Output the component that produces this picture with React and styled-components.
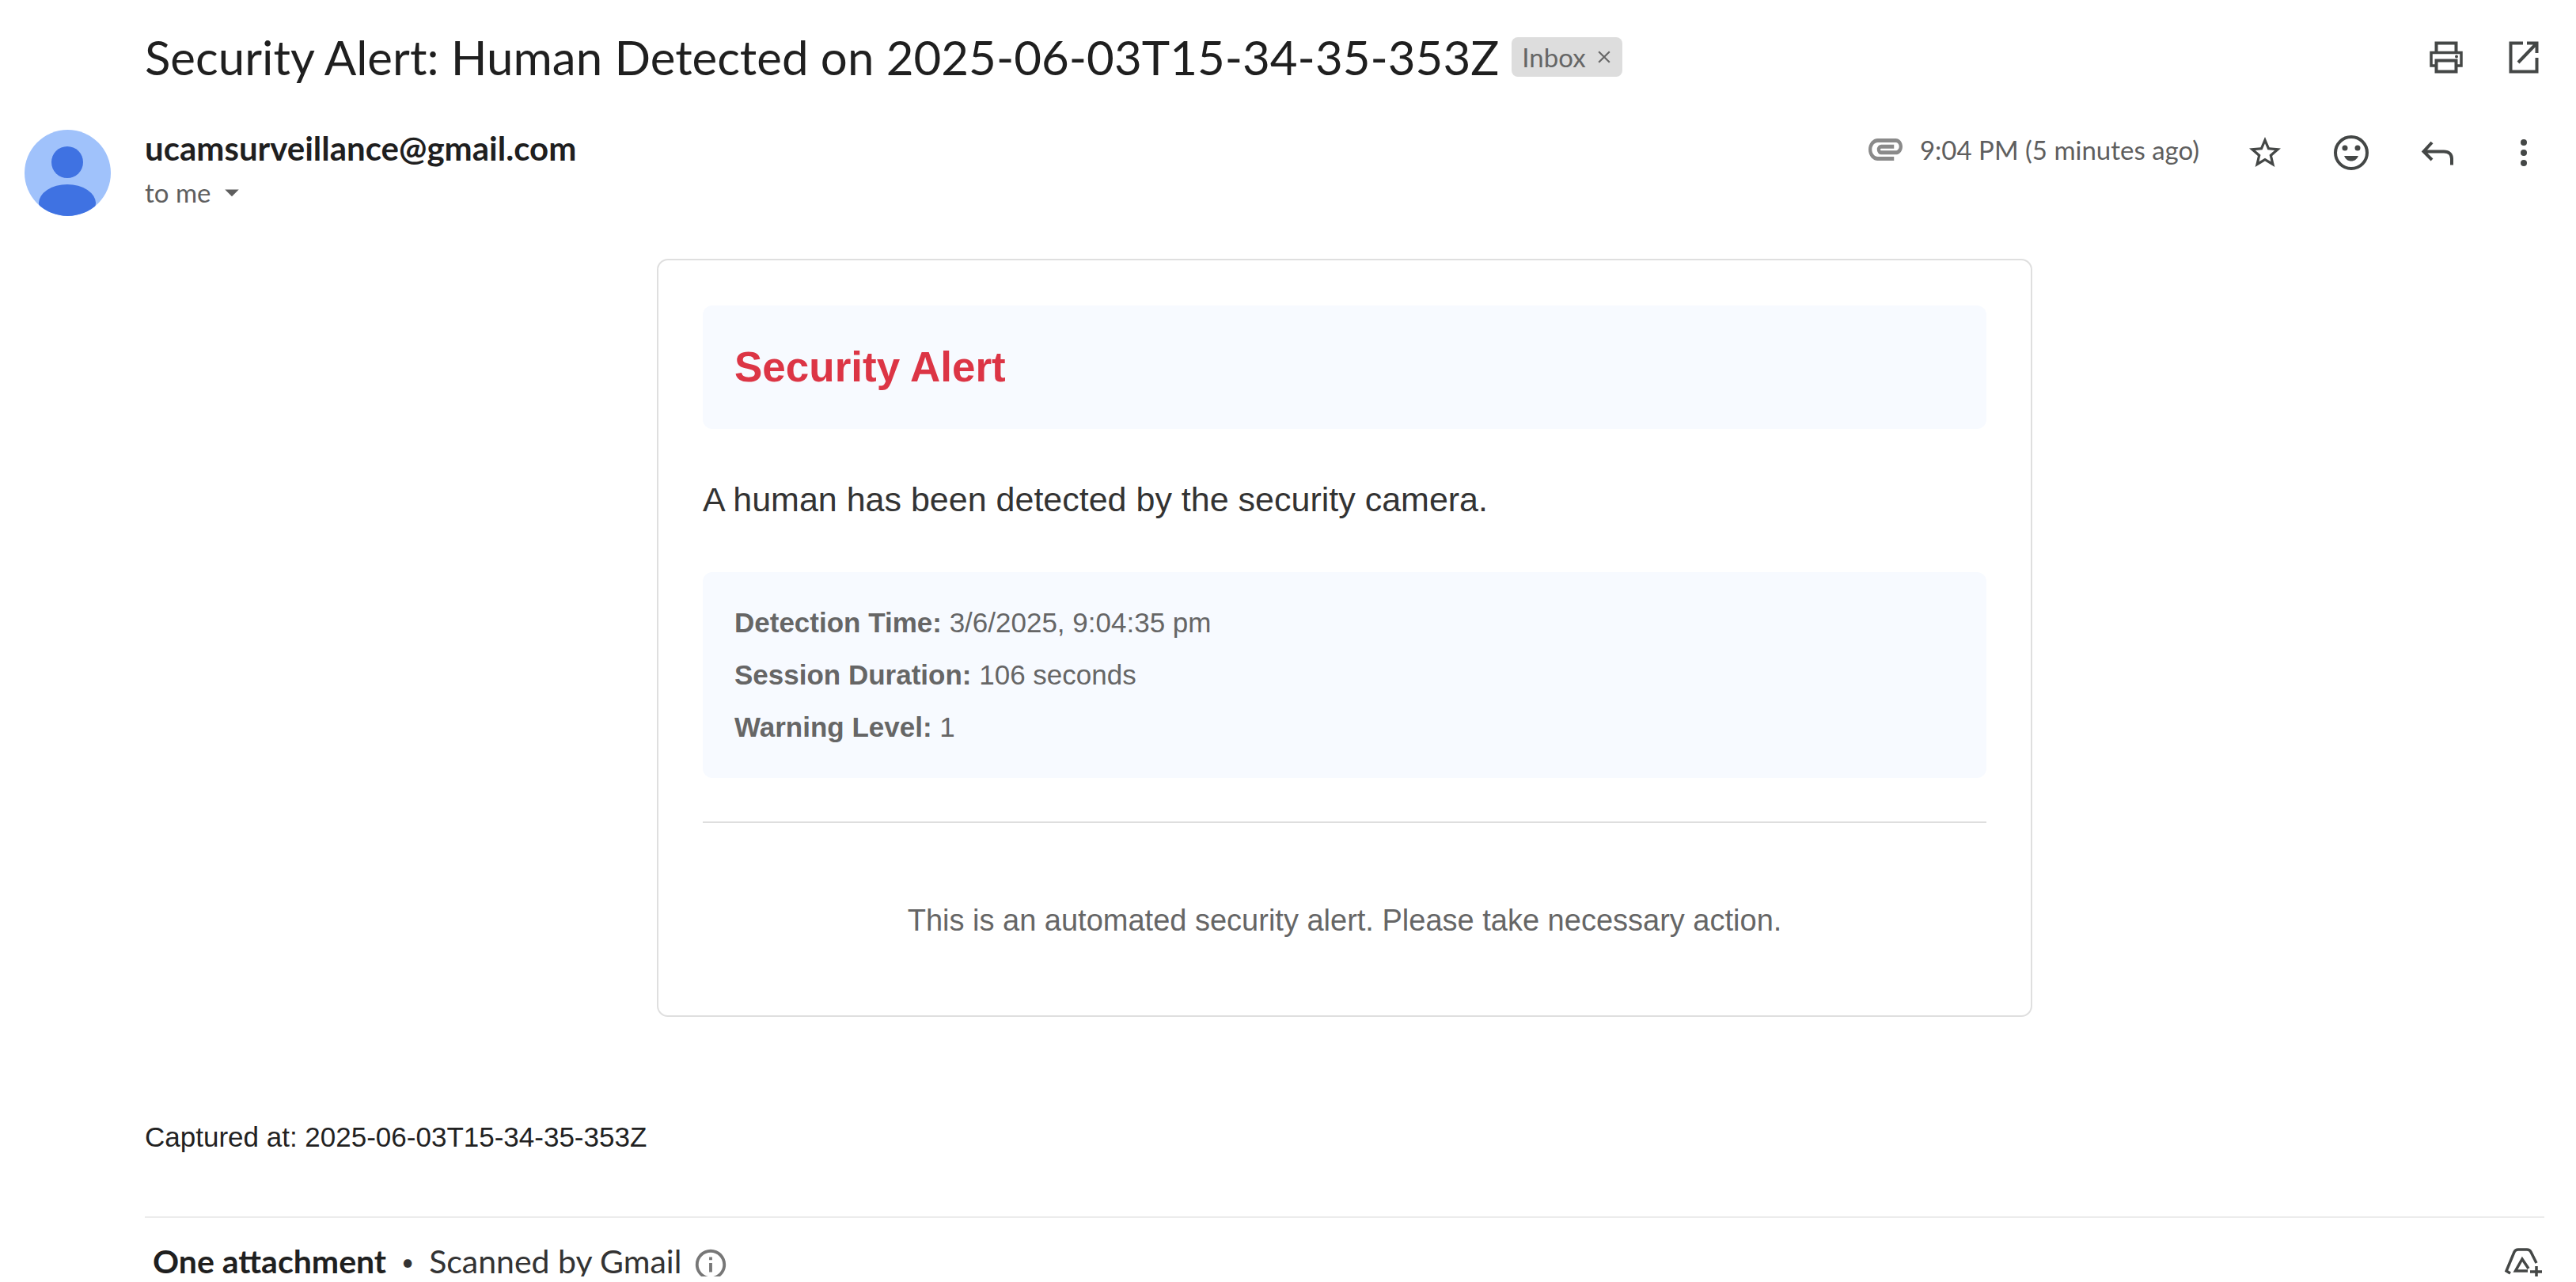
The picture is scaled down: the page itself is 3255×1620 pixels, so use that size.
import React from "react";
import styled, { createGlobalStyle } from "styled-components";
import { MdClose, MdInfoOutline, MdStarBorder, MdArrowDropDown } from "react-icons/md";

const GlobalStyle = createGlobalStyle`
  *, *::before, *::after { box-sizing: border-box; }
  body {
    margin: 0;
    background: #fff;
    color: #202124;
    font-family: Lato, "Open Sans", sans-serif;
  }
  h1, h2, p { margin: 0; }
`;

const Page = styled.main`
  padding: 36px 40px 0 31px;
`;

const SubjectRow = styled.header`
  display: flex;
  align-items: center;
  gap: 16px;
  padding-left: 152px;
`;

const Subject = styled.h1`
  font-size: 60px;
  line-height: 72px;
  font-weight: 400;
  color: #1f1f1f;
`;

const Chip = styled.span`
  display: inline-flex;
  align-items: center;
  gap: 10px;
  height: 50px;
  padding: 0 10px 0 13px;
  border-radius: 8px;
  background: #dddddd;
  color: #666;
  font-size: 33px;
  line-height: 40px;
`;

const PlainButton = styled.button`
  display: inline-flex;
  align-items: center;
  justify-content: center;
  flex: none;
  padding: 0;
  border: 0;
  background: none;
  color: inherit;
  cursor: pointer;
`;

const IconButton = styled(PlainButton)`
  width: 52px;
  height: 52px;
  color: #444746;
`;

const Actions = styled.div`
  display: flex;
  align-items: center;
  gap: ${(p) => p.$gap};
  height: 62px;
  margin-left: auto;
`;

const Message = styled.article`
  display: grid;
  grid-template-columns: 109px minmax(0, 1fr);
  column-gap: 43px;
  margin-top: 54px;
`;

const Avatar = styled.svg`
  width: 109px;
  height: 109px;
  margin-top: 2px;
`;

const SenderRow = styled.div`
  display: flex;
  align-items: flex-start;
`;

const SenderInfo = styled.div`
  display: flex;
  flex-direction: column;
  align-items: flex-start;
  gap: 10px;
`;

const Sender = styled.span`
  font-size: 42px;
  line-height: 50px;
  font-weight: 700;
  color: #1f1f1f;
`;

const Recipient = styled(PlainButton)`
  gap: 6px;
  font-family: inherit;
  font-size: 33px;
  line-height: 40px;
  color: #5e5e5e;
`;

const Timestamp = styled.span`
  display: flex;
  align-items: center;
  gap: 22px;
  padding-bottom: 8px;
  font-size: 33px;
  line-height: 40px;
  color: #5e5e5e;
`;

const Body = styled.div`
  grid-column: 2;
`;

const AlertCard = styled.section`
  max-width: 1738px;
  margin: 54px auto 0;
  padding: 57px 56px 93px;
  border: 2px solid #dfdfdf;
  border-radius: 14px;
  font-family: "Liberation Sans", Arial, sans-serif;
`;

const Panel = styled.div`
  padding: ${(p) => p.$pad} 40px;
  border-radius: 12px;
  background: #f7faff;
`;

const AlertTitle = styled.h2`
  font-size: 53px;
  line-height: 76px;
  color: #dc3545;
`;

const Lead = styled.p`
  margin: 59px 0 62px;
  font-size: 43px;
  line-height: 60px;
  color: #333;
`;

const Fact = styled.p`
  font-size: 35px;
  line-height: 66px;
  color: #666;
`;

const CardFooter = styled.footer`
  margin-top: 55px;
  padding-top: 96px;
  border-top: 2px solid #dedede;
  font-size: 38px;
  line-height: 54px;
  text-align: center;
  color: #666;
`;

const Captured = styled.p`
  margin: 127px 0 75px;
  font-family: "Liberation Sans", Arial, sans-serif;
  font-size: 35px;
  line-height: 50px;
  color: #222;
`;

const AttachmentSection = styled.footer`
  padding-top: 36px;
  border-top: 2px solid #ececec;
`;

const AttachmentRow = styled.div`
  display: flex;
  align-items: flex-start;
  gap: 14px;
  height: 38px;
  padding-left: 10px;
  overflow: hidden;
  font-size: 41px;
  line-height: 38px;
  color: #333;
`;

const Strong = styled.strong`
  color: #1f1f1f;
`;

const Dot = styled.span`
  width: 26px;
  font-size: 28px;
  text-align: center;
`;

const DriveButton = styled(IconButton)`
  margin-left: auto;
`;

const line = { fill: "none", stroke: "currentColor", strokeWidth: 4 };

const PrintIcon = () => (
  <svg width="52" height="52" viewBox="0 0 52 52" {...line} aria-hidden="true">
    <path d="M13.500 20V8.500h25V20" />
    <path d="M13.500 37H7V20.500h38V37h-6.500" strokeWidth="3.500" />
    <path d="M13.500 30.500h25v14h-25z" />
    <circle cx="39" cy="25.500" r="2" fill="currentColor" stroke="none" />
  </svg>
);

const OpenIcon = () => (
  <svg width="52" height="52" viewBox="0 0 52 52" {...line} aria-hidden="true">
    <path d="M25 8.500H9.500v36h33V27" />
    <path d="M30 8.500h12.500V21M42 9L19 33" />
  </svg>
);

const ClipIcon = () => (
  <svg width="43" height="28" viewBox="2 7 20 11" preserveAspectRatio="none" fill="#8a8a8a" aria-hidden="true">
    <path d="M2 12.500C2 9.460 4.460 7 7.500 7H18c2.210 0 4 1.790 4 4s-1.790 4-4 4H9.500a2.500 2.500 0 0 1 0-5H17v2H9.410c-.55 0-.55 1 0 1H18c1.100 0 2-.9 2-2s-.9-2-2-2H7.500C5.570 9 4 10.570 4 12.500S5.570 16 7.500 16H17v2H7.500C4.460 18 2 15.540 2 12.500z" />
  </svg>
);

const SmileIcon = () => (
  <svg width="52" height="52" viewBox="0 0 52 52" {...line} aria-hidden="true">
    <circle cx="26" cy="26" r="20" />
    <circle cx="18" cy="20" r="3.500" fill="currentColor" stroke="none" />
    <circle cx="34" cy="20" r="3.500" fill="currentColor" stroke="none" />
    <path d="M17 30h18c-2 4.500-5 6.500-9 6.500s-7-2-9-6.500z" fill="currentColor" stroke="none" />
  </svg>
);

const ReplyIcon = () => (
  <svg width="52" height="52" viewBox="0 0 52 52" {...line} aria-hidden="true">
    <path d="M19 13L8.500 24.500L19 35M9 24.500h25c7 0 10 4 10 9v8" />
  </svg>
);

const MoreIcon = () => (
  <svg width="52" height="52" viewBox="0 0 52 52" fill="currentColor" aria-hidden="true">
    <circle cx="26" cy="13" r="4" />
    <circle cx="26" cy="26" r="4" />
    <circle cx="26" cy="39" r="4" />
  </svg>
);

const DriveIcon = () => (
  <svg width="52" height="52" viewBox="0 4 52 52" {...line} strokeWidth="3.500" aria-hidden="true">
    <path d="M9 38L4 35L14 11q1.500-3 5-3h11q3.500 0 5 3l7 14" />
    <path d="M31 35H15.500L24 20l8 12" />
    <path d="M42 29v13M34 36h15" />
  </svg>
);

export default function App() {
  return (
    <>
      <GlobalStyle />
      <Page>
        <SubjectRow>
          <Subject>Security Alert: Human Detected on 2025-06-03T15-34-35-353Z</Subject>
          <Chip>
            Inbox
            <PlainButton aria-label="Remove label Inbox">
              <MdClose size={26} />
            </PlainButton>
          </Chip>
          <Actions $gap="46px">
            <IconButton aria-label="Print"><PrintIcon /></IconButton>
            <IconButton aria-label="Open in new window"><OpenIcon /></IconButton>
          </Actions>
        </SubjectRow>

        <Message>
          <Avatar viewBox="0 0 109 109" role="img" aria-label="Sender">
            <defs>
              <clipPath id="avatar-circle"><circle cx="54.500" cy="54.500" r="54.500" /></clipPath>
            </defs>
            <g clipPath="url(#avatar-circle)">
              <rect width="109" height="109" fill="#a0c2fb" />
              <circle cx="54" cy="41" r="20" fill="#3f72e2" />
              <ellipse cx="54" cy="93" rx="36" ry="24" fill="#3f72e2" />
            </g>
          </Avatar>
          <SenderRow>
            <SenderInfo>
              <Sender>ucamsurveillance@gmail.com</Sender>
              <Recipient>
                to me
                <MdArrowDropDown size={42} />
              </Recipient>
            </SenderInfo>
            <Actions $gap="57px">
              <Timestamp>
                <ClipIcon />
                9:04 PM (5 minutes ago)
              </Timestamp>
              <IconButton aria-label="Star"><MdStarBorder size={48} /></IconButton>
              <IconButton aria-label="Add reaction"><SmileIcon /></IconButton>
              <IconButton aria-label="Reply"><ReplyIcon /></IconButton>
              <IconButton aria-label="More"><MoreIcon /></IconButton>
            </Actions>
          </SenderRow>

          <Body>
            <AlertCard>
              <Panel $pad="40px">
                <AlertTitle>Security Alert</AlertTitle>
              </Panel>
              <Lead>A human has been detected by the security camera.</Lead>
              <Panel $pad="31px">
                <Fact><strong>Detection Time:</strong> 3/6/2025, 9:04:35 pm</Fact>
                <Fact><strong>Session Duration:</strong> 106 seconds</Fact>
                <Fact><strong>Warning Level:</strong> 1</Fact>
              </Panel>
              <CardFooter>This is an automated security alert. Please take necessary action.</CardFooter>
            </AlertCard>

            <Captured>Captured at: 2025-06-03T15-34-35-353Z</Captured>

            <AttachmentSection>
              <AttachmentRow>
                <Strong>One attachment</Strong>
                <Dot>•</Dot>
                <span>Scanned by Gmail</span>
                <MdInfoOutline size={46} color="#777" />
                <DriveButton aria-label="Add to Drive"><DriveIcon /></DriveButton>
              </AttachmentRow>
            </AttachmentSection>
          </Body>
        </Message>
      </Page>
    </>
  );
}
